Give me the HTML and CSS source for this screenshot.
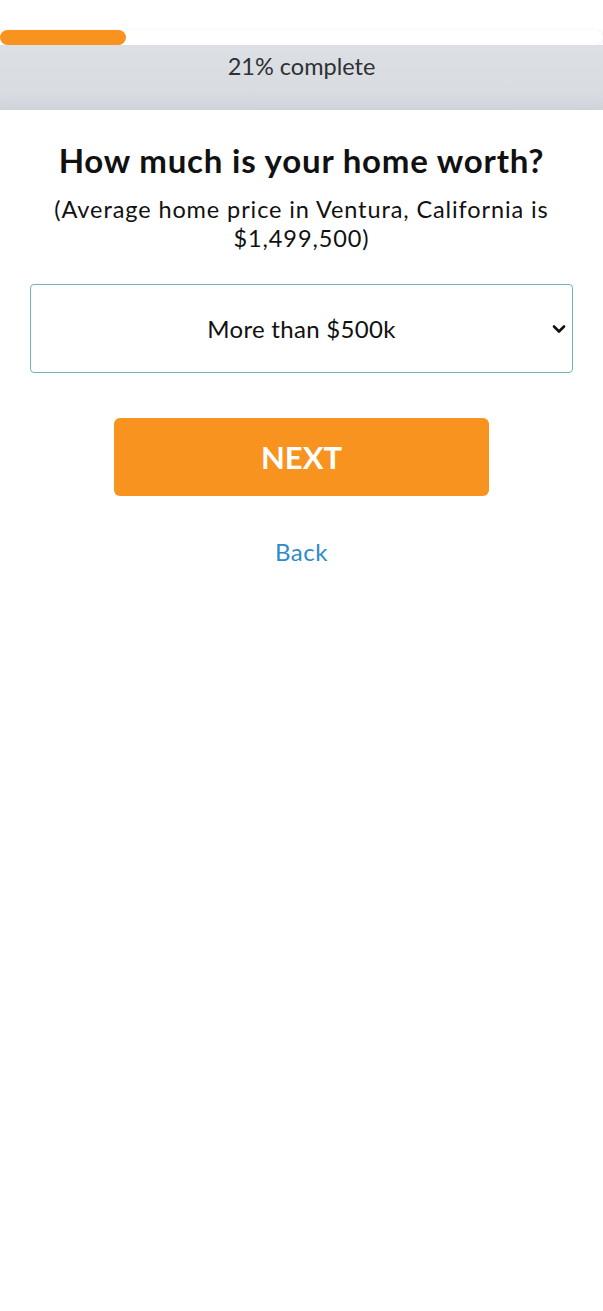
FILE: index.html
```html
<!DOCTYPE html>
<html lang="en">
<head>
    <meta charset="UTF-8">
    <meta name="viewport" content="width=device-width, initial-scale=1.0">
    <title>Home value</title>
    <link rel="stylesheet" href="styles.css">
</head>
<body>
    <div class="progress">
        <div class="track">
            <div class="fill" style="width: 21%"></div>
        </div>
        <div class="progress-label">21% complete</div>
    </div>

    <div class="card">
        <h1>How much is your home worth?</h1>
        <p class="hint">(Average home price in Ventura, California is $1,499,500)</p>
        <div class="select-box">
            <span>More than $500k</span>
            <svg class="chevron" width="14" height="10" viewBox="0 0 14 10">
                <path d="M2 2.5 L7 7.5 L12 2.5" fill="none" stroke="#111" stroke-width="2.6" stroke-linecap="round" stroke-linejoin="round"/>
            </svg>
        </div>
        <button class="next">NEXT</button>
        <a class="back" href="#">Back</a>
    </div>
</body>
</html>
```

FILE: styles.css
```css
body {
    margin: 0;
    font-family: Lato, "Noto Sans", sans-serif;
    background-color: #fff;
    color: #111;
}
.progress {
    padding-top: 30px;
}
.track {
    height: 15px;
    background-color: #fff;
    border-radius: 0 8px 8px 0;
    box-shadow: 1px 0 2px rgba(0, 0, 0, 0.08);
}
.fill {
    height: 15px;
    max-width: 126px;
    background-color: #f7931e;
    border-radius: 8px;
}
.progress-label {
    height: 65px;
    box-sizing: border-box;
    padding-top: 7px;
    text-align: center;
    font-size: 23.5px;
    color: #2e3135;
    background: linear-gradient(#dcdfe3, #d9dce1 70%, #d1d5dc);
}
.card {
    display: flex;
    flex-direction: column;
    align-items: center;
    padding: 30px 30px 70px;
    background-color: #fff;
    box-shadow: 0 8px 16px rgba(140, 160, 190, 0.22);
}
h1 {
    margin: 0;
    font-size: 33px;
    font-weight: 700;
    letter-spacing: 0.8px;
    line-height: 40px;
    text-align: center;
    white-space: nowrap;
}
.hint {
    margin: 15px 0 0;
    font-size: 23.5px;
    letter-spacing: 0.9px;
    line-height: 29px;
    text-align: center;
    padding: 0 5px;
}
.select-box {
    position: relative;
    align-self: stretch;
    height: 87px;
    margin-top: 31px;
    display: flex;
    align-items: center;
    justify-content: center;
    border: 1px solid #6fb4b9;
    border-radius: 4px;
    font-size: 24px;
    letter-spacing: 0.3px;
}
.chevron {
    position: absolute;
    right: 6px;
    top: 39px;
}
.next {
    margin-top: 45px;
    width: 375px;
    height: 78px;
    border: none;
    border-radius: 6px;
    background-color: #f7931e;
    color: #fff;
    font-family: inherit;
    font-size: 31px;
    font-weight: 700;
}
.back {
    margin-top: 41px;
    font-size: 24px;
    letter-spacing: 0.5px;
    color: #2d8bc8;
    text-decoration: none;
}
```
